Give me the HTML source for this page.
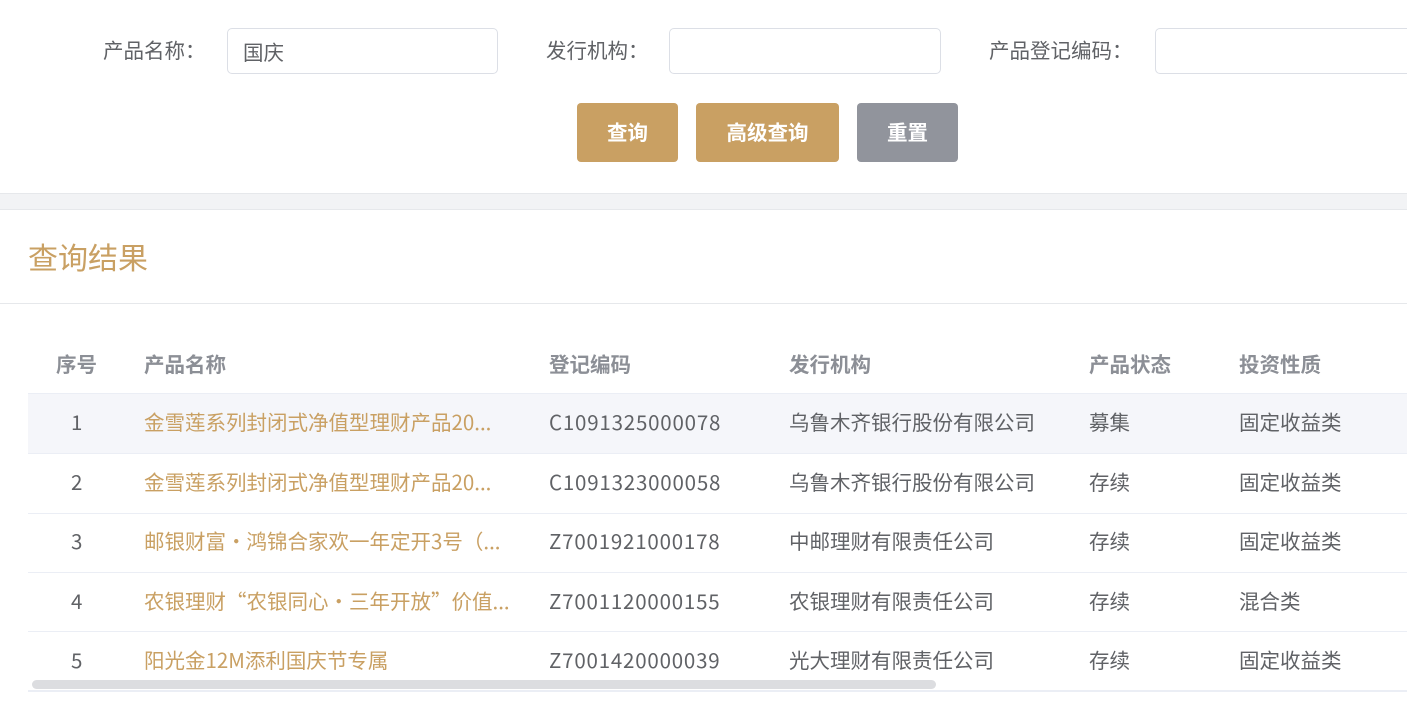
<!DOCTYPE html><html><head><meta charset="utf-8"><style>
body{margin:0;width:1407px;height:708px;overflow:hidden;background:#fff;font-family:"Noto Sans CJK SC","Liberation Sans",sans-serif;color:#606266;position:relative}
.a{position:absolute;white-space:nowrap}
.lbl{font-size:20.5px;color:#606266;top:35px;line-height:28px}
.inp{top:28px;height:44px;border:1px solid #dcdfe6;border-radius:5px;background:#fff;font-size:20.5px;line-height:44px;padding-left:15px;box-sizing:content-box}
.btn{top:103px;height:59px;border-radius:4px;color:#fff;font-size:20.5px;font-weight:bold;text-align:center;line-height:57px;background:#c9a063}
.th{top:349px;font-size:20.5px;font-weight:bold;color:#8c8f96;line-height:28px}
.td{font-size:20.5px;line-height:28px;margin-top:-3px}
.c{letter-spacing:0.8px}
.gold{color:#c9a063}
.ln{position:absolute;left:28px;width:1379px;height:1px;background:#ebeef5}
</style></head><body>
<div class="a lbl" style="left:103px">产品名称：</div>
<div class="a inp" style="left:227px;width:254px;color:#606266">国庆</div>
<div class="a lbl" style="left:546px">发行机构：</div>
<div class="a inp" style="left:669px;width:255px"></div>
<div class="a lbl" style="left:989px">产品登记编码：</div>
<div class="a inp" style="left:1155px;width:260px"></div>
<div class="a btn" style="left:577px;width:101px">查询</div>
<div class="a btn" style="left:696px;width:143px">高级查询</div>
<div class="a btn" style="left:857px;width:101px;background:#91949c">重置</div>
<div class="a" style="left:0;top:193px;width:1407px;height:17px;background:#f2f3f5;border-top:1px solid #e6e8eb;border-bottom:1px solid #e6e8eb;box-sizing:border-box"></div>
<div class="a gold" style="left:28px;top:236px;font-size:30px;line-height:40px">查询结果</div>
<div class="a" style="left:0;top:303px;width:1407px;height:1px;background:#e6e8eb"></div>
<div class="a th" style="left:56px">序号</div>
<div class="a th" style="left:144px">产品名称</div>
<div class="a th" style="left:549px">登记编码</div>
<div class="a th" style="left:789px">发行机构</div>
<div class="a th" style="left:1089px">产品状态</div>
<div class="a th" style="left:1239px">投资性质</div>
<div class="a" style="left:28px;top:393px;width:1379px;height:60px;background:#f5f6fa"></div>
<div class="ln" style="top:393px"></div><div class="ln" style="top:453px"></div><div class="ln" style="top:513px"></div><div class="ln" style="top:572px"></div><div class="ln" style="top:631px"></div><div class="ln" style="top:690px;height:2px"></div>

<div class="a td" style="left:71px;top:410px">1</div><div class="a td gold" style="left:144px;top:410px">金雪莲系列封闭式净值型理财产品20...</div><div class="a td c" style="left:549px;top:410px">C1091325000078</div><div class="a td" style="left:789px;top:410px">乌鲁木齐银行股份有限公司</div><div class="a td" style="left:1089px;top:410px">募集</div><div class="a td" style="left:1239px;top:410px">固定收益类</div>
<div class="a td" style="left:71px;top:470px">2</div><div class="a td gold" style="left:144px;top:470px">金雪莲系列封闭式净值型理财产品20...</div><div class="a td c" style="left:549px;top:470px">C1091323000058</div><div class="a td" style="left:789px;top:470px">乌鲁木齐银行股份有限公司</div><div class="a td" style="left:1089px;top:470px">存续</div><div class="a td" style="left:1239px;top:470px">固定收益类</div>
<div class="a td" style="left:71px;top:529px">3</div><div class="a td gold" style="left:144px;top:529px">邮银财富·鸿锦合家欢一年定开3号（...</div><div class="a td c" style="left:549px;top:529px">Z7001921000178</div><div class="a td" style="left:789px;top:529px">中邮理财有限责任公司</div><div class="a td" style="left:1089px;top:529px">存续</div><div class="a td" style="left:1239px;top:529px">固定收益类</div>
<div class="a td" style="left:71px;top:589px">4</div><div class="a td gold" style="left:144px;top:589px">农银理财“农银同心·三年开放”价值...</div><div class="a td c" style="left:549px;top:589px">Z7001120000155</div><div class="a td" style="left:789px;top:589px">农银理财有限责任公司</div><div class="a td" style="left:1089px;top:589px">存续</div><div class="a td" style="left:1239px;top:589px">混合类</div>
<div class="a td" style="left:71px;top:648px">5</div><div class="a td gold" style="left:144px;top:648px">阳光金12M添利国庆节专属</div><div class="a td c" style="left:549px;top:648px">Z7001420000039</div><div class="a td" style="left:789px;top:648px">光大理财有限责任公司</div><div class="a td" style="left:1089px;top:648px">存续</div><div class="a td" style="left:1239px;top:648px">固定收益类</div>
<div class="a" style="left:32px;top:680px;width:904px;height:9px;border-radius:5px;background:#dcdde0"></div>
</body></html>
